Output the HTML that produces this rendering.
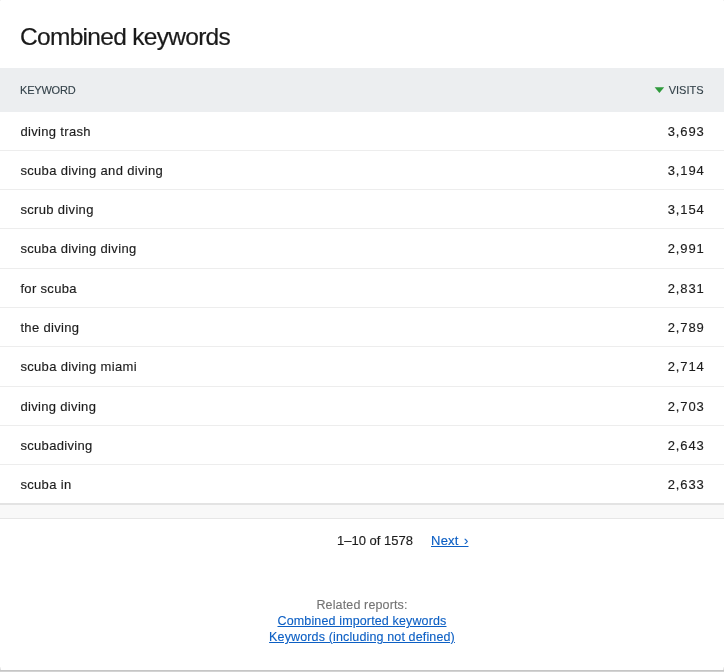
<!DOCTYPE html>
<html><head><meta charset="utf-8">
<style>
html,body{margin:0;padding:0;}
body{width:724px;height:672px;overflow:hidden;background:#fff;position:relative;will-change:transform;font-family:"Liberation Sans",sans-serif;color:#222;}
.abs{position:absolute;line-height:1;white-space:nowrap;}
.title{left:20px;top:25px;font-size:24.5px;color:#1a1a1a;letter-spacing:-0.7px;-webkit-text-stroke:0.2px #1a1a1a;}
.thead{position:absolute;left:0;top:68px;width:724px;height:44px;background:#eceef0;}
.th{position:absolute;top:16.7px;font-size:11px;line-height:1;color:#34424a;-webkit-text-stroke:0.12px #34424a;}
.th.l{left:20px;letter-spacing:-0.2px;}
.th.r{right:20.5px;}
.tri{position:absolute;left:654px;top:19px;}
.row{position:absolute;left:0;width:724px;height:39.3px;}
.row::after{content:"";position:absolute;left:0;right:0;top:38.3px;height:1px;background:#ededed;}
.kw{position:absolute;left:20.4px;top:13.3px;font-size:13px;line-height:1;letter-spacing:0.33px;color:#1c1c1c;-webkit-text-stroke:0.15px #1c1c1c;}
.num{position:absolute;right:19.3px;top:13.5px;font-size:13px;line-height:1;letter-spacing:0.9px;color:#1c1c1c;-webkit-text-stroke:0.15px #1c1c1c;}
.strip{position:absolute;left:0;top:503px;width:724px;height:16px;background:#f8f8f8;border-top:2px solid #e3e3e3;border-bottom:1px solid #e6e6e6;box-sizing:border-box;}
.pag{top:534px;font-size:13px;color:#1c1c1c;-webkit-text-stroke:0.15px #1c1c1c;}
a{color:#0c5fc4;text-decoration:underline;}
.related{position:absolute;left:0;width:724px;text-align:center;font-size:12.5px;line-height:16px;letter-spacing:0.14px;}
.rel-label{color:#737373;-webkit-text-stroke:0.12px #737373;}
.related a{-webkit-text-stroke:0.12px #0c5fc4;}
.shadow{position:absolute;left:0;top:670px;width:724px;height:2px;background:linear-gradient(#c6c6c6 0,#c6c6c6 1px,#d3d3d3 1px,#d3d3d3 2px);}
.px{position:absolute;top:0;width:1px;height:1px;background:#f3f3f3;}
.corner{position:absolute;left:0;top:667px;width:1px;height:3px;background:linear-gradient(#f6f6f6,#dcdcdc);}
</style></head><body>
<div class="abs title">Combined keywords</div>
<div class="thead"><span class="th l">KEYWORD</span><svg class="tri" width="12" height="8" viewBox="0 0 12 8"><polygon points="0.6,0.3 10.2,0.3 5.4,6" fill="#2f9a3c"/></svg><span class="th r">VISITS</span></div>
<div class="row" style="top:111.6px"><span class="kw" style="top:13.10px">diving trash</span><span class="num" style="top:13.30px">3,693</span></div>
<div class="row" style="top:150.9px"><span class="kw" style="top:12.80px">scuba diving and diving</span><span class="num" style="top:13.00px">3,194</span></div>
<div class="row" style="top:190.2px"><span class="kw" style="top:12.50px">scrub diving</span><span class="num" style="top:12.70px">3,154</span></div>
<div class="row" style="top:229.5px"><span class="kw" style="top:12.20px">scuba diving diving</span><span class="num" style="top:12.40px">2,991</span></div>
<div class="row" style="top:268.8px"><span class="kw" style="top:12.90px">for scuba</span><span class="num" style="top:13.10px">2,831</span></div>
<div class="row" style="top:308.1px"><span class="kw" style="top:12.60px">the diving</span><span class="num" style="top:12.80px">2,789</span></div>
<div class="row" style="top:347.4px"><span class="kw" style="top:12.30px">scuba diving miami</span><span class="num" style="top:12.50px">2,714</span></div>
<div class="row" style="top:386.7px"><span class="kw" style="top:13.00px">diving diving</span><span class="num" style="top:13.20px">2,703</span></div>
<div class="row" style="top:426.0px"><span class="kw" style="top:12.70px">scubadiving</span><span class="num" style="top:12.90px">2,643</span></div>
<div class="row" style="top:465.3px"><span class="kw" style="top:12.40px">scuba in</span><span class="num" style="top:12.60px">2,633</span></div>
<div class="strip"></div>
<div class="abs pag" style="left:337px;">1–10 of 1578</div>
<div class="abs pag" style="left:431px;letter-spacing:0.25px;word-spacing:1.3px;"><a style="-webkit-text-stroke:0.15px #0c5fc4">Next ›</a></div>
<div class="related" style="top:597px;"><span class="rel-label">Related reports:</span><br><a>Combined imported keywords</a><br><a>Keywords (including not defined)</a></div>
<div class="shadow"></div><div class="corner"></div><div class="corner" style="left:723px"></div><div class="px" style="left:0"></div><div class="px" style="left:723px"></div>
</body></html>
